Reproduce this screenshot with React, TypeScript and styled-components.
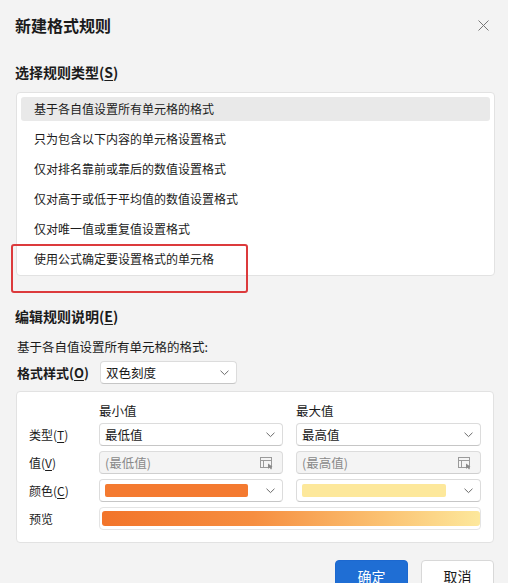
import React from 'react'
import styled, { createGlobalStyle } from 'styled-components'

const GlobalStyle = createGlobalStyle`
  html, body {
    margin: 0;
    padding: 0;
    background: #f3f3f3;
  }
  body {
    font-family: "Noto Sans CJK SC", "Noto Sans", "Liberation Sans", sans-serif;
    color: #1b1b1b;
  }
`

const Dialog = styled.div`
  width: 508px;
  height: 583px;
  box-sizing: border-box;
  padding: 14px 13px 0 15px;
  background: #f3f3f3;
  overflow: hidden;
  display: flex;
  flex-direction: column;
`

const Header = styled.div`
  display: flex;
  align-items: center;
  justify-content: space-between;
  height: 22px;
`

const Title = styled.div`
  font-size: 16px;
  font-weight: 700;
  line-height: 22px;
`

const CloseButton = styled.button`
  border: none;
  background: transparent;
  padding: 0;
  width: 16px;
  height: 16px;
  margin-right: 4px;
  display: flex;
  align-items: center;
  justify-content: center;
  color: #777;
`

const SectionTitle = styled.div<{ $top: number }>`
  margin-top: ${(p) => p.$top}px;
  font-size: 14px;
  font-weight: 700;
  line-height: 20px;
`

const Key = styled.span`
  text-decoration: underline;
  text-underline-offset: 2px;
`

const ListWrap = styled.div`
  position: relative;
  margin-top: 10px;
  margin-left: 1px;
`

const RuleList = styled.div`
  background: #fff;
  border: 1px solid #e2e2e2;
  border-radius: 4px;
  padding: 4px;
  display: flex;
  flex-direction: column;
  gap: 6px;
`

const RuleItem = styled.div<{ $selected?: boolean }>`
  height: 24px;
  line-height: 24px;
  padding-left: 13px;
  font-size: 12px;
  border-radius: 3px;
  background: ${(p) => (p.$selected ? '#e9e9e9' : 'transparent')};
`

const Highlight = styled.div`
  position: absolute;
  left: -5px;
  top: 152px;
  width: 237px;
  height: 49px;
  box-sizing: border-box;
  border: 2px solid #dc3a3c;
  border-radius: 3px;
`

const Desc = styled.div`
  margin-top: 12px;
  margin-left: 2px;
  font-size: 12.5px;
  line-height: 18px;
`

const StyleRow = styled.div`
  margin-top: 5px;
  margin-left: 2px;
  display: flex;
  align-items: center;
`

const StyleLabel = styled.div`
  width: 83px;
  font-size: 13px;
  font-weight: 700;
`

const Field = styled.div<{ $width?: number; $disabled?: boolean }>`
  width: ${(p) => (p.$width ? `${p.$width}px` : 'auto')};
  height: 23px;
  box-sizing: border-box;
  border: 1px solid #dcdcdc;
  border-bottom-color: ${(p) => (p.$disabled ? '#cfcfcf' : '#c6c6c6')};
  border-radius: 4px;
  background: ${(p) => (p.$disabled ? '#f4f4f4' : '#fff')};
  display: flex;
  align-items: center;
  padding: 0 7px 0 5px;
  gap: 6px;
  font-size: 12.5px;
  color: ${(p) => (p.$disabled ? '#8a8a8a' : '#1b1b1b')};
`

const FieldText = styled.span`
  flex: 1;
  white-space: nowrap;
`

const Swatch = styled.span<{ $color: string }>`
  flex: 1;
  height: 13px;
  border-radius: 2px;
  background: ${(p) => p.$color};
  margin-right: 12px;
`

const PreviewBar = styled.span`
  flex: 1;
  height: 15px;
  border-radius: 3px;
  margin-left: -2px;
  margin-right: -4px;
  background: linear-gradient(to right, #f2742a 0%, #f68e40 40%, #fbc373 75%, #fde89c 100%);
`

const Panel = styled.div`
  margin-top: 7px;
  margin-left: 1px;
  width: 478px;
  box-sizing: border-box;
  background: #fff;
  border: 1px solid #e2e2e2;
  border-radius: 4px;
  padding: 11px 12px 12px 12px;
  display: grid;
  grid-template-columns: 57px 184px 185px;
  grid-template-rows: 15px repeat(4, 23px);
  column-gap: 13px;
  row-gap: 5px;
  align-items: center;
`

const ColHead = styled.div`
  font-size: 12.5px;
  line-height: 15px;
`

const RowLabel = styled.div`
  font-size: 12px;
`

const Preview = styled(Field)`
  grid-column: 2 / 4;
  padding: 0 4px;
  border-color: #e4e4e4;
`

const Footer = styled.div`
  margin-top: 17px;
  display: flex;
  justify-content: flex-end;
  gap: 13px;
  padding-right: 1px;
`

const Button = styled.button<{ $primary?: boolean }>`
  width: 73px;
  height: 32px;
  box-sizing: border-box;
  border-radius: 4px;
  font-family: inherit;
  font-size: 14px;
  border: 1px solid ${(p) => (p.$primary ? '#1c68cf' : '#d8d8d8')};
  background: ${(p) => (p.$primary ? '#1f6ed4' : '#fff')};
  color: ${(p) => (p.$primary ? '#fff' : '#1b1b1b')};
`

const Chevron = () => (
  <svg width="9" height="6" viewBox="0 0 9 6" fill="none">
    <path d="M0.8 1 L4.5 4.6 L8.2 1" stroke="#6a6a6a" strokeWidth="1" strokeLinecap="round" strokeLinejoin="round" />
  </svg>
)

const RangeIcon = () => (
  <svg width="16" height="14" viewBox="0 0 16 14" fill="none">
    <rect x="1.5" y="1.5" width="11" height="10" stroke="#9a9a9a" strokeWidth="1" />
    <path d="M1.5 4.5 H12.5 M4.5 4.5 V11.5" stroke="#9a9a9a" strokeWidth="1" />
    <path d="M9 7.5 L9 13 L10.5 11.6 L12 13.5 L13 12.8 L11.6 11 L13.6 10.8 Z" fill="#8a8a8a" />
  </svg>
)

const rules = [
  '基于各自值设置所有单元格的格式',
  '只为包含以下内容的单元格设置格式',
  '仅对排名靠前或靠后的数值设置格式',
  '仅对高于或低于平均值的数值设置格式',
  '仅对唯一值或重复值设置格式',
  '使用公式确定要设置格式的单元格',
]

export default function App() {
  return (
    <>
      <GlobalStyle />
      <Dialog>
        <Header>
          <Title>新建格式规则</Title>
          <CloseButton>
            <svg width="11" height="11" viewBox="0 0 11 11">
              <path d="M0.5 0.5 L10.5 10.5 M10.5 0.5 L0.5 10.5" stroke="currentColor" strokeWidth="1" />
            </svg>
          </CloseButton>
        </Header>

        <SectionTitle $top={26}>
          选择规则类型(<Key>S</Key>)
        </SectionTitle>
        <ListWrap>
          <RuleList>
            {rules.map((r, i) => (
              <RuleItem key={r} $selected={i === 0}>
                {r}
              </RuleItem>
            ))}
          </RuleList>
          <Highlight />
        </ListWrap>

        <SectionTitle $top={30}>
          编辑规则说明(<Key>E</Key>)
        </SectionTitle>
        <Desc>基于各自值设置所有单元格的格式:</Desc>
        <StyleRow>
          <StyleLabel>
            格式样式(<Key>O</Key>)
          </StyleLabel>
          <Field $width={137}>
            <FieldText>双色刻度</FieldText>
            <Chevron />
          </Field>
        </StyleRow>

        <Panel>
          <span />
          <ColHead>最小值</ColHead>
          <ColHead>最大值</ColHead>

          <RowLabel>
            类型(<Key>T</Key>)
          </RowLabel>
          <Field>
            <FieldText>最低值</FieldText>
            <Chevron />
          </Field>
          <Field>
            <FieldText>最高值</FieldText>
            <Chevron />
          </Field>

          <RowLabel>
            值(<Key>V</Key>)
          </RowLabel>
          <Field $disabled>
            <FieldText>(最低值)</FieldText>
            <RangeIcon />
          </Field>
          <Field $disabled>
            <FieldText>(最高值)</FieldText>
            <RangeIcon />
          </Field>

          <RowLabel>
            颜色(<Key>C</Key>)
          </RowLabel>
          <Field>
            <Swatch $color="#f47a30" />
            <Chevron />
          </Field>
          <Field>
            <Swatch $color="#fde89b" />
            <Chevron />
          </Field>

          <RowLabel>预览</RowLabel>
          <Preview>
            <PreviewBar />
          </Preview>
        </Panel>

        <Footer>
          <Button $primary>确定</Button>
          <Button>取消</Button>
        </Footer>
      </Dialog>
    </>
  )
}
